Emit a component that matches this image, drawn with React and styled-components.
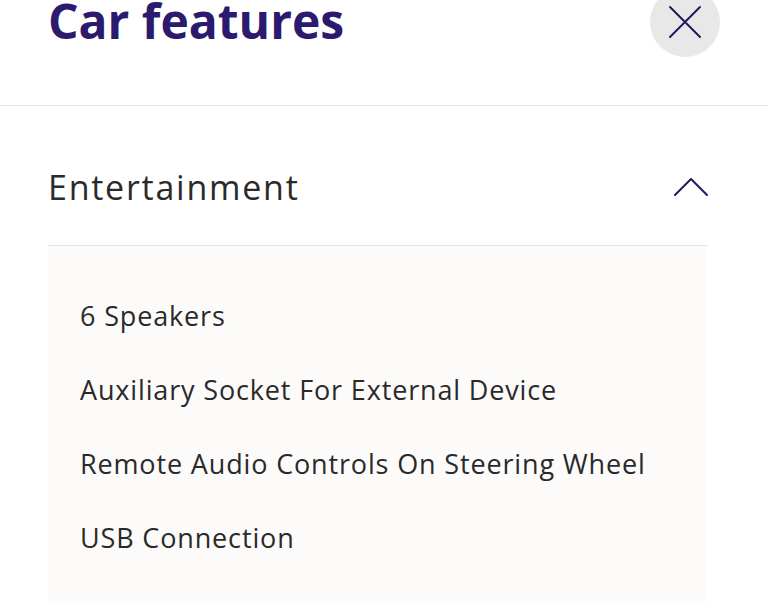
import React from 'react';
import styled, { createGlobalStyle } from 'styled-components';

const GlobalStyle = createGlobalStyle`
  body {
    margin: 0;
    background: #ffffff;
    font-family: "Open Sans", Lato, sans-serif;
    overflow: hidden;
  }
`;

const features = [
  '6 Speakers',
  'Auxiliary Socket For External Device',
  'Remote Audio Controls On Steering Wheel',
  'USB Connection',
];

const App = () => {
  return (
    <Page>
      <GlobalStyle />
      <Header>
        <Title>Car features</Title>
        <CloseButton aria-label="Close">
          <svg width="34" height="34" viewBox="0 0 34 34" fill="none">
            <path d="M2 2 L32 32 M32 2 L2 32" stroke="#221a5c" strokeWidth="2" strokeLinecap="round" />
          </svg>
        </CloseButton>
      </Header>
      <Section>
        <SectionHeader>
          <SectionTitle>Entertainment</SectionTitle>
          <svg width="34" height="18" viewBox="0 0 34 18" fill="none">
            <path d="M1 17 L17 1 L33 17" stroke="#221a5c" strokeWidth="2" strokeLinecap="round" strokeLinejoin="round" />
          </svg>
        </SectionHeader>
        <Panel>
          {features.map((f) => (
            <Item key={f}>{f}</Item>
          ))}
        </Panel>
      </Section>
    </Page>
  );
};

export default App;

const Page = styled.div`
  width: 768px;
  height: 603px;
  overflow: hidden;
`;

const Header = styled.header`
  display: flex;
  justify-content: space-between;
  align-items: flex-start;
  margin-top: -13px;
  height: 119px;
  padding: 0 48px;
  border-bottom: 1px solid #e6e6e6;
  box-sizing: border-box;
`;

const Title = styled.h1`
  margin: 0;
  font-size: 48px;
  line-height: 68px;
  font-weight: 700;
  color: #2b1a6e;
`;

const CloseButton = styled.button`
  display: flex;
  align-items: center;
  justify-content: center;
  width: 70px;
  height: 70px;
  border-radius: 50%;
  border: none;
  padding: 0;
  background: #e8e8e8;
`;

const Section = styled.section`
  padding: 0 60px 0 48px;
`;

const SectionHeader = styled.div`
  display: flex;
  justify-content: space-between;
  align-items: center;
  height: 140px;
  padding-top: 22px;
  box-sizing: border-box;
  border-bottom: 1px solid #e3e3e3;
`;

const SectionTitle = styled.h2`
  margin: 0;
  font-size: 34px;
  font-weight: 400;
  letter-spacing: 1.75px;
  color: #2a2a2a;
`;

const Panel = styled.ul`
  list-style: none;
  margin: 0;
  padding: 33px 0 0 32px;
  width: 658px;
  box-sizing: border-box;
  background: #fcfbfa;
  height: 400px;
`;

const Item = styled.li`
  font-size: 27px;
  line-height: 74px;
  letter-spacing: 0.85px;
  color: #2a2a2a;
`;
